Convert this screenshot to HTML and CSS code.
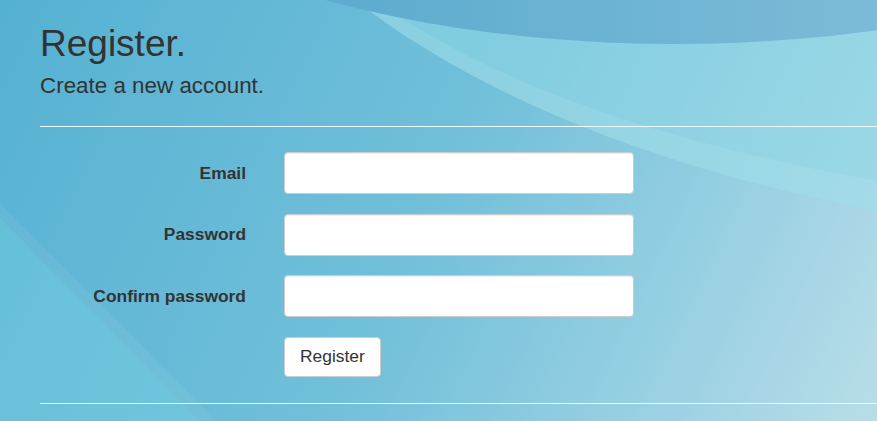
FILE: index.html
```html
<!DOCTYPE html>
<html lang="en">
<head>
<meta charset="utf-8">
<title>Register</title>
<link rel="stylesheet" href="styles.css">
</head>
<body>
<div class="bg" aria-hidden="true">
  <svg class="bg-svg" viewBox="0 0 877 421" preserveAspectRatio="none" xmlns="http://www.w3.org/2000/svg">
    <defs>
      <linearGradient id="base" gradientUnits="userSpaceOnUse" x1="0" y1="0" x2="877" y2="421">
        <stop offset="0" stop-color="#55b1d2"/>
        <stop offset="0.5" stop-color="#72c0da"/>
        <stop offset="1" stop-color="#b8dde9"/>
      </linearGradient>
      <linearGradient id="arc" gradientUnits="userSpaceOnUse" x1="320" y1="0" x2="877" y2="0">
        <stop offset="0" stop-color="#5babce"/>
        <stop offset="1" stop-color="#7cbbd7"/>
      </linearGradient>
    </defs>
    <rect x="0" y="0" width="877" height="421" fill="url(#base)"/>
    <path d="M355,0 C470,90 650,170 900,215 L900,0 Z" fill="#8fd8e6" fill-opacity="0.55"/>
    <path d="M375,0 C480,75 640,140 900,185 L900,215 C650,170 470,90 355,0 Z" fill="#ffffff" fill-opacity="0.09"/>
    <path d="M0,218 Q100,320 200,421 L0,421 Z" fill="#78d2e1" fill-opacity="0.4"/>
    <path d="M0,204 Q100,302 216,421 L200,421 Q100,320 0,218 Z" fill="#ffffff" fill-opacity="0.06"/>
    <ellipse cx="675" cy="-236" rx="650" ry="280" fill="url(#arc)"/>
  </svg>
</div>
<main class="page">
  <h1 class="title">Register.</h1>
  <h2 class="subtitle">Create a new account.</h2>
  <div class="rule"></div>
  <form class="form">
    <label class="label" for="email">Email</label>
    <input class="field" id="email" type="email">
    <label class="label" for="password">Password</label>
    <input class="field" id="password" type="password">
    <label class="label" for="confirm">Confirm password</label>
    <input class="field" id="confirm" type="password">
    <button class="btn" type="button">Register</button>
  </form>
  <div class="rule rule-bottom"></div>
</main>
</body>
</html>
```
FILE: styles.css
```css
html, body {
  margin: 0;
  padding: 0;
}

body {
  position: relative;
  width: 877px;
  height: 421px;
  overflow: hidden;
  font-family: "Liberation Sans", Arial, sans-serif;
  color: #333;
  background: #5ab5d3;
}

.bg {
  position: absolute;
  inset: 0;
  z-index: 0;
}

.bg-svg {
  display: block;
  width: 100%;
  height: 100%;
}

.page {
  position: relative;
  z-index: 1;
  padding: 24px 0 0 40px;
}

.title {
  margin: 0;
  font-size: 37px;
  font-weight: 400;
  line-height: 40px;
}

.subtitle {
  margin: 10px 0 0;
  font-size: 22.4px;
  font-weight: 400;
  line-height: 24px;
}

.rule {
  margin-top: 28px;
  border-top: 1px solid #eef7fa;
}

.rule-bottom {
  margin-top: 26.5px;
}

.form {
  display: grid;
  grid-template-columns: 206px 350px;
  column-gap: 38px;
  row-gap: 19.6px;
  margin-top: 25px;
}

.label {
  align-self: center;
  text-align: right;
  font-size: 17.4px;
  font-weight: 700;
  color: #333;
}

.field {
  box-sizing: border-box;
  height: 42px;
  margin: 0;
  border: 1px solid #ccc;
  border-radius: 4px;
  background: #fff;
  box-shadow: inset 0 1px 1px rgba(0, 0, 0, 0.075);
}

.btn {
  grid-column: 2;
  justify-self: start;
  box-sizing: border-box;
  height: 40px;
  margin: 0;
  padding: 0 15px;
  border: 1px solid #ccc;
  border-radius: 4px;
  background: #fff;
  color: #333;
  font-family: "Liberation Sans", Arial, sans-serif;
  font-size: 17.4px;
}
```
